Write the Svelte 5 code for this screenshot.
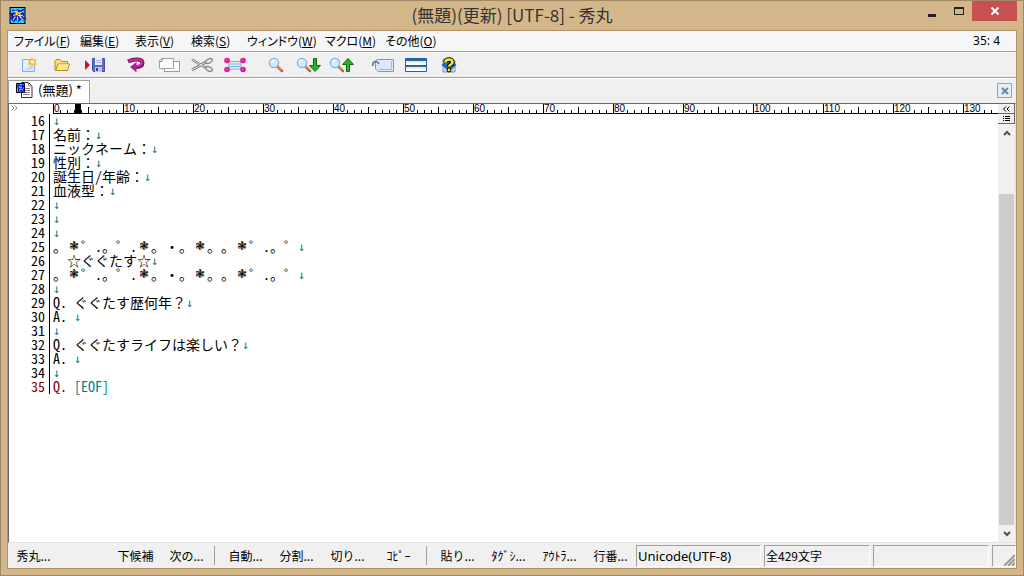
<script>
  const menus = [
    { label: "ファイル", key: "F", width: 52 },
    { label: "編集", key: "E", width: 41 },
    { label: "表示", key: "V", width: 42 },
    { label: "検索", key: "S", width: 42 },
    { label: "ウィンドウ", key: "W", width: 64 },
    { label: "マクロ", key: "M", width: 46 },
    { label: "その他", key: "O", width: 50 },
  ];

  const tools = [
    ["new", "open", "save"],
    ["undo", "copy", "cut", "select"],
    ["find", "findDown", "findUp"],
    ["tag", "split", "help"],
  ];

  const decades = Array.from({ length: 14 }, (_, i) => i * 10);
  const ticks = [1, 2, 3, 4, 5, 6, 7, 8, 9];

  const deco = "。❃゜.。゜.❃。・。❃。。❃゜.。゜";

  const firstLine = 16;
  const lines = [
    "",
    "名前：",
    "ニックネーム：",
    "性別：",
    "誕生日/年齢：",
    "血液型：",
    "",
    "",
    "",
    deco,
    "　☆ぐぐたす☆",
    deco,
    "",
    "Q. ぐぐたす歴何年？",
    "A. ",
    "",
    "Q. ぐぐたすライフは楽しい？",
    "A. ",
    "",
    "Q. ",
  ];
  const caretRow = lines.length - 1;

  const functionKeys = [
    ["秀丸...", "", "下候補", "次の..."],
    ["自動...", "分割...", "切り...", "ｺﾋﾟｰ"],
    ["貼り...", "ﾀｸﾞｼ...", "ｱｳﾄﾗ...", "行番..."],
  ];

  function charClass(ch) {
    if (ch === "❃") return "flower";
    return ch.charCodeAt(0) < 128 ? "half" : "full";
  }
</script>

{#snippet appIcon(size)}
  <svg width={size} height={size} viewBox="0 0 16 16" aria-hidden="true">
    <rect x="1" y=".5" width="14" height="15" fill="#1fe0ee" stroke="#000" />
    <path d="M3 2l3 1 2-1 3 1 3-1-1 3 2 2-2 2 1 4-3-1-2 2-3-2-4 1 1-3-2-2 2-3z" fill="#0a10e8" />
    <path
      d="M3 5l3-1 1 2M8 3l-1 3 4-1 2-1M4 8l3-1 3 1 3 0M6 9l-2 3m4-3l0 4m2-4l3 3M10 6l1 3"
      fill="none"
      stroke="#f6ef22"
      stroke-width="1.2"
    />
    <path d="M0 6h3m-2 5l3-1m8 0l4 1m-5-7l3-2M6 12l-2 2" stroke="#0a10e8" stroke-width="1.2" />
  </svg>
{/snippet}

{#snippet lens()}
  <path d="M9 9l5 5" stroke="#b06a3a" stroke-width="2.6" stroke-linecap="round" />
  <path d="M9 8.5l4.500 4.500" stroke="#f0b27c" />
  <circle cx="6" cy="6" r="4.6" fill="#cfeafd" stroke="#8eb0dc" stroke-width="1.3" />
  <path d="M3.500 5.500a3 3 0 0 1 3-2.200" fill="none" stroke="#fff" stroke-width="1.3" />
{/snippet}

{#snippet toolIcon(name)}
  {#if name === "new"}
    <svg width="16" height="16" viewBox="0 0 16 16">
      <path d="M1.500 2.500h12v12h-12z" fill="#e2f0fc" stroke="#8aa9d6" />
      <path d="M3 13l9-6v6z" fill="#c3dcf6" />
      <path d="M11 0l1.500 2.500L16 2l-1.500 3L16 8l-3.500-.5L11 10 9.500 7.500 6.500 8 8 5 6.500 2l3 .5z" fill="#f5bd45" />
      <circle cx="11.500" cy="5" r="1.800" fill="#fff3bb" />
    </svg>
  {:else if name === "open"}
    <svg width="18" height="16" viewBox="0 0 17 16">
      <path d="M1.500 13V3.500l1-1h4l1.500 2h6V7" fill="#f7dc78" stroke="#b78a1c" />
      <path d="M2 13.500L4.500 7h11.500l-2 6.500z" fill="#fbe57f" stroke="#b78a1c" />
      <path d="M5 8h10" stroke="#fff8cc" />
    </svg>
  {:else if name === "save"}
    <svg width="22" height="16" viewBox="0 0 22 16">
      <path d="M1 3v10l5-5z" fill="#d3101d" />
      <path d="M8.500 1.500h12v13h-11l-1-1z" fill="#5f6bc8" stroke="#4450a8" />
      <path d="M11 1h7v7h-7z" fill="#e9edfb" />
      <path d="M12 3.500h5m-5 2h5" stroke="#a9b3dc" />
      <path d="M11 10h7v5h-7z" fill="#bfc6e8" />
      <path d="M12 11h2v3h-2z" fill="#38439a" />
    </svg>
  {:else if name === "undo"}
    <svg width="20" height="16" viewBox="0 0 20 16">
      <path
        d="M2 4.500c6-3 14.500-3 14.500 1.500 0 3-4 4-7.500 4"
        fill="none"
        stroke="#8d1070"
        stroke-width="4"
      />
      <path d="M3 4c6-2.500 13-2 13 1.500 0 2-3 3.500-7 3.500" fill="none" stroke="#d13aae" stroke-width="1.4" />
      <path d="M10.500 5v10.500L4 10z" fill="#b01d8d" />
    </svg>
  {:else if name === "copy"}
    <svg width="22" height="16" viewBox="0 0 22 16">
      <path d="M6.500 4.500h15v10h-15z" fill="#fff" stroke="#999" />
      <path d="M3.500 1.500h12v10h-14v-8z" fill="#fafafa" stroke="#a2a2a2" />
      <path d="M1.500 4.500h2.500V1.500" fill="none" stroke="#888" />
    </svg>
  {:else if name === "cut"}
    <svg width="22" height="16" viewBox="0 0 22 16">
      <path d="M1 2.500l14 8.500M1 13L15 5" stroke="#777" stroke-width="2.6" />
      <path d="M1 2.500l14 8.500M1 13L15 5" stroke="#e7e7e7" />
      <ellipse cx="18" cy="4" rx="3.500" ry="2" transform="rotate(-25 18 4)" fill="#eee" stroke="#888" stroke-width="1.4" />
      <ellipse cx="18" cy="12" rx="3.500" ry="2" transform="rotate(25 18 12)" fill="#eee" stroke="#888" stroke-width="1.4" />
    </svg>
  {:else if name === "select"}
    <svg width="22" height="16" viewBox="0 0 22 16">
      <path d="M4 4.500h14M4 7h14M4 9.500h14M4 12h14" stroke="#74aed6" />
      <path d="M5 4v8M17 4v8" stroke="#a8cde7" stroke-width="2" />
      <g fill="#e01a9b">
        <circle cx="3" cy="3.500" r="2.800" />
        <circle cx="19" cy="3.500" r="2.800" />
        <circle cx="3" cy="12.500" r="2.800" />
        <circle cx="19" cy="12.500" r="2.800" />
      </g>
      <path d="M2 3h1m15 0h1M2 12h1m15 0h1" stroke="#ffb4e2" />
    </svg>
  {:else if name === "find"}
    <svg width="16" height="16" viewBox="0 0 16 16">{@render lens()}</svg>
  {:else if name === "findDown"}
    <svg width="26" height="16" viewBox="0 0 26 16">
      {@render lens()}
      <path d="M17.500 1.500h3v7h4L19 14.500 13.500 8.500h4z" fill="#25b81e" stroke="#0c6b10" />
    </svg>
  {:else if name === "findUp"}
    <svg width="26" height="16" viewBox="0 0 26 16">
      {@render lens()}
      <path d="M17.500 14.500h3v-7h4L19 1.500 13.500 7.500h4z" fill="#25b81e" stroke="#0c6b10" />
    </svg>
  {:else if name === "tag"}
    <svg width="22" height="16" viewBox="0 0 22 16">
      <path d="M5 2.500h16.500v12H6L3.500 12V5z" fill="#dce7fa" stroke="#8593c4" />
      <path d="M19.500 4v8.500H7" fill="none" stroke="#aab7df" />
      <path d="M1 9C0 4 5 3 7 7" fill="none" stroke="#6670a8" stroke-width="1.6" />
    </svg>
  {:else if name === "split"}
    <svg width="22" height="16" viewBox="0 0 22 16">
      <path d="M.5 1.500h21v13H.5z" fill="#fff" stroke="#2c5f9f" />
      <path d="M1 2h20v2H1zM1 8h20v2H1z" fill="#2865ad" />
      <path d="M1 5h20M1 11h20" stroke="#c8dff2" />
    </svg>
  {:else}
    <svg width="16" height="16" viewBox="0 0 16 16">
      <path d="M2 2h10l2 2v11H2z" fill="#cdd9e8" stroke="#8296b0" />
      <path d="M.5 8L8 1.500 15.500 8 8 14.500z" fill="#1767cf" />
      <path d="M4.500 5.500c0-4 7-4 7 0 0 2-3.500 2-3.500 4" fill="none" stroke="#000" stroke-width="4.4" />
      <circle cx="8" cy="13" r="2.400" fill="#000" />
      <path d="M4.500 5.500c0-4 7-4 7 0 0 2-3.500 2-3.500 4" fill="none" stroke="#ffea18" stroke-width="2.5" />
      <circle cx="8" cy="13" r="1.400" fill="#ffea18" />
    </svg>
  {/if}
{/snippet}

<div class="window">
  <header class="titlebar">
    <div class="title-icon">{@render appIcon(17)}</div>
    <h1>(無題)(更新) [UTF-8] - 秀丸</h1>
    <div class="window-buttons">
      <button aria-label="最小化">
        <svg width="10" height="12"><path d="M1 9h8v3H1z" fill="#222" /></svg>
      </button>
      <button aria-label="最大化">
        <svg width="10" height="12" shape-rendering="crispEdges">
          <path d="M0 2h10v8H0zM1 4v5h8V4z" fill="#222" fill-rule="evenodd" />
        </svg>
      </button>
      <button class="close" aria-label="閉じる">
        <svg width="10" height="10"><path d="M1.500 1.500l7 7m0-7l-7 7" stroke="#fff" stroke-width="2" /></svg>
      </button>
    </div>
  </header>

  <div class="client">
    <nav class="menubar">
      {#each menus as menu}
        <button style="width: {menu.width}px">{menu.label}(<u>{menu.key}</u>)</button>
      {/each}
      <span class="cursor-pos">35: 4</span>
    </nav>

    <div class="toolbar">
      {#each tools as group}
        <div class="tool-group">
          {#each group as name}
            <button aria-label={name}>{@render toolIcon(name)}</button>
          {/each}
        </div>
      {/each}
    </div>

    <div class="tabs">
      <button class="tab">
        <svg width="17" height="16" viewBox="0 0 17 16" aria-hidden="true">
          <path d="M5.500.5h7l3.500 3.500v11.500H5.500z" fill="#fff" stroke="#333" />
          <path d="M12.500.5V4H16M9 6.500h5M9 8.500h5M9 10.500h5M7 12.500h7" fill="none" stroke="#888" />
          <path d="M.5 1.500h8v9h-8z" fill="#1fd5ee" stroke="#000" />
          <path d="M1 3l2-1 2 2 2-2 2 2-2 2 2 3-3 1-2-1-2 1 0-3z" fill="#0a10e8" />
          <path d="M3 4l1 2 2-1M3 8l2-1 2 1" fill="none" stroke="#f6ef22" />
        </svg>
        <span>(無題) *</span>
      </button>
      <button class="tab-close" aria-label="タブを閉じる">
        <svg width="8" height="8"><path d="M1 1l6 6m0-6l-6 6" stroke="#73879c" stroke-width="2" /></svg>
      </button>
    </div>

    <div class="editor">
      <div class="page">
        <div class="ruler">
          <div class="ruler-corner">
            <svg width="7" height="6"><path d="M.5.5L3 3 .5 5.500M3.500.5L6 3 3.500 5.500" fill="none" stroke="#888" /></svg>
          </div>
          <div class="scale">
            {#each decades as n}
              <div class="decade">
                <svg width="70" height="9" shape-rendering="crispEdges" aria-hidden="true">
                  <rect width="1" height="9" />
                  {#each ticks as t}
                    <rect x={t * 7} y={t === 5 ? 3 : 6} width="1" height="6" />
                  {/each}
                  {#if n === 0}
                    <path d="M22 0h6v7h1v2h-8V7h1z" />
                  {/if}
                </svg>
                <span>{n}</span>
              </div>
            {/each}
          </div>
        </div>

        <div class="lines">
          {#each lines as line, i}
            <div class="line" class:current={i === caretRow}>
              <span class="number">{firstLine + i}</span>
              <span class="text"
                >{#each line as ch}<span class={charClass(ch)}>{ch}</span>{/each}{#if i === caretRow}{#each "[EOF]" as ch}<span
                      class="half mark">{ch}</span
                    >{/each}{:else}<span class="mark arrow">↓</span>{/if}</span
              >
            </div>
          {/each}
        </div>
      </div>

      <div class="scrollbar">
        <button class="small" aria-label="ルーラー">
          <svg width="7" height="6"><path d="M3 .5L.5 3 3 5.500M6.500.5L4 3l2.500 2.500" fill="none" stroke="#000" /></svg>
        </button>
        <button class="small" aria-label="一覧">
          <svg width="7" height="6" shape-rendering="crispEdges">
            <path d="M0 0h1v1H0zM2 0h5v1H2zM0 2h1v1H0zM2 2h5v1H2zM0 4h1v1H0zM2 4h5v1H2z" />
          </svg>
        </button>
        <button class="step" aria-label="上へ">
          <svg width="8" height="6"><path d="M1 5l3-3 3 3" fill="none" stroke="#505050" stroke-width="2" /></svg>
        </button>
        <div class="track">
          <div class="thumb"></div>
        </div>
        <button class="step" aria-label="下へ">
          <svg width="8" height="6"><path d="M1 1l3 3 3-3" fill="none" stroke="#505050" stroke-width="2" /></svg>
        </button>
      </div>
    </div>

    <footer class="status">
      {#each functionKeys as group}
        <div class="keys">
          {#each group as key}
            <button>{key}</button>
          {/each}
        </div>
      {/each}
      <div class="panel encoding">Unicode(UTF-8)</div>
      <div class="panel count">全429文字</div>
      <div class="panel blank"></div>
      <div class="panel grip">
        <svg width="12" height="12"><path d="M1 12L12 1M5 12l7-7M9 12l3-3" stroke="#999" stroke-width="2" /></svg>
      </div>
    </footer>
  </div>
</div>

<style>
  :global(body) {
    margin: 0;
  }

  .window {
    box-sizing: border-box;
    min-height: 100vh;
    display: flex;
    flex-direction: column;
    padding: 0 6px 6px;
    border: 1px solid #9e8866;
    background: #d3b78a;
    color: #000;
    font-family: "Noto Sans CJK JP", sans-serif;
    font-size: 12px;
    line-height: 16px;
  }

  button {
    margin: 0;
    padding: 0;
    border: 0;
    background: none;
    color: inherit;
    font: inherit;
    white-space: nowrap;
  }

  svg {
    display: block;
    flex: none;
  }

  .titlebar {
    display: grid;
    grid-template-columns: 1fr auto 1fr;
    height: 29px;
  }

  .title-icon {
    padding: 6px 0 0 2px;
  }

  h1 {
    margin: 0;
    padding-top: 4px;
    color: #333;
    font-size: 17px;
    font-weight: 400;
    line-height: 20px;
  }

  .window-buttons {
    display: flex;
    justify-content: flex-end;
    height: 20px;
  }

  .window-buttons button {
    display: flex;
    align-items: center;
    justify-content: center;
    width: 27px;
  }

  .window-buttons .close {
    width: 45px;
    background: #c75050;
  }

  .client {
    flex: 1;
    display: flex;
    flex-direction: column;
    border: 1px solid #b19568;
    background: #f0f0f0;
  }

  .menubar {
    display: flex;
    align-items: center;
    gap: 14px;
    height: 20px;
    padding: 0 16px 0 6px;
    border-bottom: 1px solid #a0a0a0;
    background: #f5f6f7;
    font-feature-settings: "palt";
  }

  .menubar button {
    text-align: left;
  }

  .cursor-pos {
    margin-left: auto;
    font-family: "Noto Sans", sans-serif;
    font-size: 12px;
  }

  .toolbar {
    display: flex;
    gap: 8px;
    height: 24px;
    padding: 0 4px;
    border-top: 1px solid #fff;
    border-bottom: 1px solid #a0a0a0;
  }

  .tool-group {
    display: flex;
  }

  .tool-group button {
    display: flex;
    align-items: center;
    justify-content: center;
    width: 33px;
  }

  .tabs {
    display: flex;
    justify-content: space-between;
    align-items: flex-end;
    height: 24px;
    padding-right: 4px;
    border-top: 1px solid #fff;
  }

  .tab {
    display: flex;
    align-items: center;
    gap: 5px;
    height: 23px;
    padding: 0 7px 4px;
    box-sizing: border-box;
    border: 1px solid #a0a0a0;
    border-bottom: 0;
    background: #fff;
    font-size: 13px;
  }

  .tab-close {
    display: flex;
    align-items: center;
    justify-content: center;
    width: 15px;
    height: 15px;
    margin-bottom: 5px;
    border: 1px solid #94a3b5;
    background: #e1eefb;
  }

  .editor {
    flex: 1;
    display: flex;
    border: 1px solid #e3e3e3;
    border-top-color: #696969;
    border-left-color: #696969;
    background: #fff;
  }

  .page {
    flex: 1;
    min-width: 0;
  }

  .ruler {
    display: flex;
    height: 10px;
  }

  .ruler-corner {
    flex: none;
    width: 44px;
    padding-top: 1px;
    box-sizing: border-box;
    padding-left: 2px;
  }

  .scale {
    flex: 1;
    display: flex;
    overflow: hidden;
    box-sizing: border-box;
    height: 10px;
    border-bottom: 1px solid #000;
  }

  .decade {
    flex: none;
    display: grid;
    width: 70px;
  }

  .decade > * {
    grid-area: 1 / 1;
  }

  .decade span {
    justify-self: start;
    height: 9px;
    margin-left: 1px;
    background: #fff;
    font-family: "Liberation Sans", sans-serif;
    font-size: 10px;
    line-height: 9px;
  }

  .lines {
    font-size: 14px;
    line-height: 12px;
  }

  .line {
    display: flex;
    height: 14px;
  }

  .number {
    box-sizing: border-box;
    width: 41px;
    padding-right: 4px;
    border-right: 1px solid #000;
    text-align: right;
    font-feature-settings: "hwid";
  }

  .text {
    padding-left: 3px;
    white-space: pre;
  }

  .half,
  .full,
  .flower,
  .arrow {
    display: inline-block;
    width: 14px;
    height: 14px;
    vertical-align: top;
  }

  .half,
  .arrow {
    width: 7px;
    font-feature-settings: "hwid";
  }

  .flower {
    font-family: "DejaVu Sans", sans-serif;
    font-size: 12px;
    font-weight: 700;
    text-align: center;
  }

  .arrow {
    font-family: "DejaVu Sans Mono", monospace;
    font-size: 12px;
    line-height: 14px;
  }

  .current {
    color: #800000;
  }

  .mark {
    color: #008080;
  }

  .scrollbar {
    display: flex;
    flex-direction: column;
    width: 17px;
    background: #f0f0f0;
  }

  .scrollbar button {
    display: flex;
    align-items: center;
    justify-content: center;
  }

  .small {
    box-sizing: border-box;
    height: 10px;
    border-right: 1px solid #696969;
    border-bottom: 1px solid #696969;
  }

  .step {
    height: 17px;
  }

  .track {
    flex: 1;
    display: grid;
    grid-template-rows: 53fr 330fr;
  }

  .thumb {
    grid-row: 2;
    margin: 0 1px;
    background: #cdcdcd;
  }

  .status {
    display: flex;
    align-items: center;
    height: 25px;
  }

  .keys {
    display: flex;
    align-items: center;
    height: 19px;
    padding-right: 2px;
    margin-right: 5px;
    border-right: 1px solid #a0a0a0;
  }

  .keys:nth-child(3) {
    margin: 0;
    padding: 0;
    border: 0;
  }

  .keys button {
    width: 51px;
    height: 19px;
  }

  .panel {
    box-sizing: border-box;
    height: 22px;
    margin-right: 3px;
    padding: 2px 1px;
    border: 1px solid #a0a0a0;
    border-right-color: #fff;
    border-bottom-color: #fff;
    white-space: nowrap;
  }

  .encoding {
    width: 125px;
    font-family: "Noto Sans", sans-serif;
    font-size: 13px;
  }

  .count {
    width: 106px;
  }

  .blank {
    flex: 1;
  }

  .grip {
    display: flex;
    align-items: flex-end;
    justify-content: flex-end;
    width: 24px;
    margin: 0;
    padding: 0;
  }
</style>
